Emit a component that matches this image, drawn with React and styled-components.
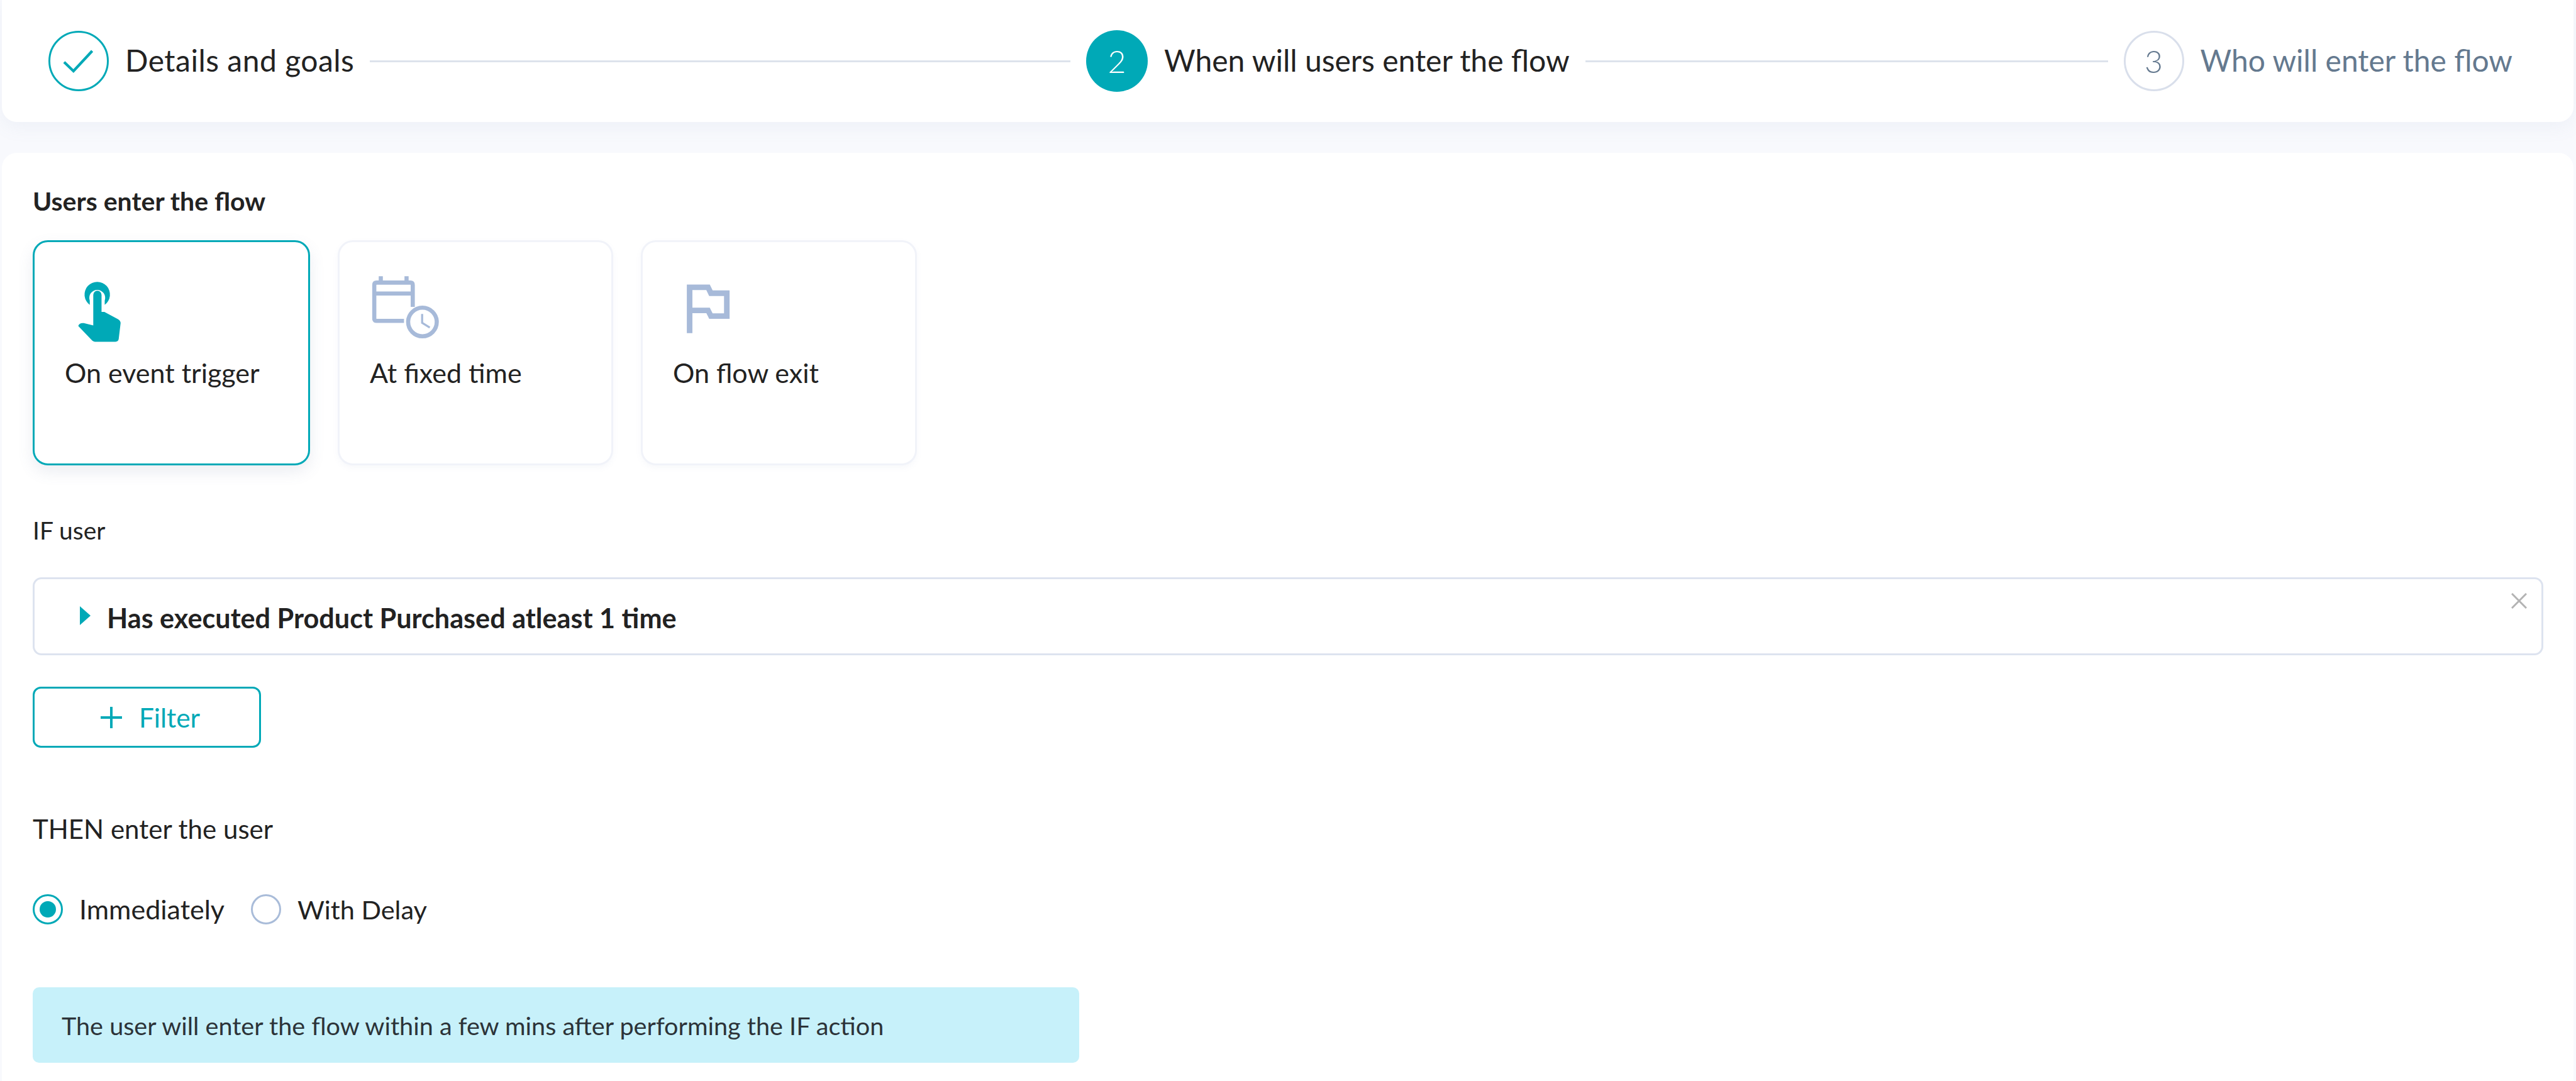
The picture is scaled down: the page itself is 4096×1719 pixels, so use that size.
import React from "react";
import styled, { createGlobalStyle } from "styled-components";

const Global = createGlobalStyle`
  html, body { margin: 0; padding: 0; background: #f8f9fd; }
  body { font-family: "Lato", "Open Sans", sans-serif; color: #222; }
  #root { width: 4096px; height: 1719px; overflow: hidden; }
`;

const Page = styled.div`
  width: 4096px;
  height: 1719px;
  padding: 0 4px 0 3px;
  box-sizing: border-box;
  display: flex;
  flex-direction: column;
  gap: 49px;
`;

const Stepper = styled.header`
  height: 194px;
  flex: none;
  background: #fff;
  border-radius: 0 0 24px 24px;
  box-shadow: 0 8px 30px rgba(120, 135, 180, 0.08);
  display: flex;
  align-items: center;
  padding: 0 97px 0 74px;
  box-sizing: border-box;
`;

const StepCircle = styled.div`
  width: ${(p) => (p.$state === "active" ? 98 : 96)}px;
  height: ${(p) => (p.$state === "active" ? 98 : 96)}px;
  flex: none;
  box-sizing: border-box;
  border-radius: 50%;
  display: flex;
  align-items: center;
  justify-content: center;
  font-size: 50px;
  font-weight: 300;
  background: ${(p) => (p.$state === "active" ? "#00a9b7" : "#fff")};
  color: ${(p) => (p.$state === "active" ? "#fff" : "#64798f")};
  border: ${(p) =>
    p.$state === "done"
      ? "3px solid #00a9b7"
      : p.$state === "todo"
      ? "3px solid #d9dfeb"
      : "none"};
`;

const StepLabel = styled.span`
  margin-left: 26px;
  margin-top: -2px;
  font-size: 48px;
  line-height: 60px;
  letter-spacing: ${(p) => p.$track || 0}px;
  white-space: nowrap;
  color: ${(p) => (p.$muted ? "#64798f" : "#222")};
`;

const StepLine = styled.div`
  flex: ${(p) => p.$grow} 1 0;
  height: 3px;
  margin: 0 25px;
  background: #dde2ec;
`;

const Panel = styled.main`
  flex: 1;
  background: #fff;
  border-radius: 24px 24px 0 0;
  padding: 0 0 0 49px;
  display: flex;
  flex-direction: column;
  align-items: flex-start;
`;

const Heading = styled.h2`
  margin: 52px 0 0;
  font-size: 41px;
  line-height: 50px;
  font-weight: 700;
  color: #222;
`;

const TriggerRow = styled.div`
  display: flex;
  gap: 44px;
  margin-top: 37px;
`;

const TriggerCard = styled.div`
  width: ${(p) => p.$w}px;
  height: 358px;
  box-sizing: border-box;
  background: #fff;
  border-radius: 24px;
  border: ${(p) => (p.$selected ? "3px solid #00a9b7" : "3px solid #f1f3f9")};
  box-shadow: ${(p) =>
    p.$selected
      ? "0 10px 24px rgba(90, 110, 150, 0.12)"
      : "0 4px 10px rgba(120, 135, 180, 0.06)"};
  padding: 25px 0 0 48px;
  display: flex;
  flex-direction: column;
  align-items: flex-start;
`;

const IconBox = styled.svg`
  display: block;
  width: 182px;
  height: 152px;
  margin-left: ${(p) => p.$x}px;
`;

const TriggerLabel = styled.div`
  margin-top: 6px;
  font-size: 43px;
  line-height: 50px;
  color: #222;
`;

const SectionLabel = styled.div`
  margin-top: ${(p) => p.$top}px;
  font-size: ${(p) => p.$size}px;
  line-height: 50px;
  color: #222;
`;

const RuleBox = styled.div`
  position: relative;
  margin-top: 50px;
  width: 3992px;
  height: 124px;
  box-sizing: border-box;
  border: 3px solid #dde3ef;
  border-radius: 14px;
  background: #fff;
  display: flex;
  align-items: center;
  padding-left: 72px;
`;

const Caret = styled.span`
  width: 0;
  height: 0;
  border-top: 15px solid transparent;
  border-bottom: 15px solid transparent;
  border-left: 17px solid #00a9b7;
  margin-right: 26px;
  margin-top: -2px;
`;

const RuleText = styled.span`
  font-size: 43.2px;
  font-weight: 700;
  line-height: 50px;
  margin-top: 4px;
  color: #222;
`;

const CloseIcon = styled.svg`
  position: absolute;
  top: 22px;
  right: 23px;
  width: 25px;
  height: 25px;
`;

const FilterButton = styled.button`
  margin-top: 50px;
  width: 363px;
  height: 97px;
  box-sizing: border-box;
  background: #fff;
  border: 3px solid #00a9b7;
  border-radius: 13px;
  color: #00a9b7;
  font-family: inherit;
  font-size: 42.5px;
  display: flex;
  align-items: center;
  justify-content: center;
  gap: 26px;
  padding: 0 0 0 10px;
`;

const RadioRow = styled.div`
  display: flex;
  align-items: center;
  margin-top: 79px;
  height: 48px;
`;

const Radio = styled.span`
  width: 48px;
  height: 48px;
  box-sizing: border-box;
  border-radius: 50%;
  border: 3px solid ${(p) => (p.$on ? "#00a9b7" : "#a9bcd9")};
  display: flex;
  align-items: center;
  justify-content: center;
  flex: none;
  &::after {
    content: "";
    display: ${(p) => (p.$on ? "block" : "none")};
    width: 26px;
    height: 26px;
    border-radius: 50%;
    background: #00a9b7;
  }
`;

const RadioLabel = styled.span`
  margin-left: 26px;
  margin-right: ${(p) => p.$gap}px;
  font-size: ${(p) => p.$size}px;
  line-height: 50px;
  color: #222;
`;

const Banner = styled.div`
  margin-top: 100px;
  width: 1664px;
  height: 120px;
  border-radius: 10px;
  background: #c7f1fa;
  display: flex;
  align-items: center;
  padding-left: 46px;
  box-sizing: border-box;
  font-size: 39.6px;
  color: #2c3338;
`;

const TEAL = "#00a9b7";
const SLATE = "#a7bad9";

const HandIcon = () => (
  <IconBox $x={-28} viewBox="0 0 720 600">
    <path
      fill={TEAL}
      d="M268 295 A80 80 0 1 1 362 295 L362 268 A50 50 0 1 0 268 268 Z"
    />
    <path
      fill={TEAL}
      d="M290 425 L290 232 A26 26 0 0 1 342 232 L342 340 L360 340 L445 385 Q462 395 462 410 L450 510 Q447 527 430 527 L300 527 Q290 527 283 520 L197 430 Q193 425 205 415 Q215 408 230 410 Z"
    />
  </IconBox>
);

const CalendarIcon = () => (
  <IconBox $x={-27} viewBox="0 0 720 600">
    <g fill="none" stroke={SLATE} strokeWidth="26">
      <path d="M322 396 L150 396 Q135 396 135 381 L135 170 Q135 155 150 155 L362 155 Q377 155 377 170 L377 308" />
      <path d="M135 224 L377 224" />
      <path d="M176 115 L176 155 M338 115 L338 155" />
      <circle cx="438" cy="403" r="90" />
    </g>
    <path d="M436 352 L436 408 L484 438" fill="none" stroke={SLATE} strokeWidth="13" />
  </IconBox>
);

const FlagIcon = () => (
  <IconBox $x={-22} viewBox="0 0 720 600">
    <path
      fill="none"
      stroke={SLATE}
      strokeWidth="35"
      d="M192 473 L192 185 L308 185 L326 222 L426 222 L426 366 L326 366 L308 330 L192 330"
    />
  </IconBox>
);

export default function App() {
  return (
    <Page>
      <Global />
      <Stepper>
        <StepCircle $state="done">
          <svg width="96" height="96" viewBox="0 0 127 127">
            <path d="M31 66 L52 86 L94 41" fill="none" stroke={TEAL} strokeWidth="6" />
          </svg>
        </StepCircle>
        <StepLabel $track={0.5}>Details and goals</StepLabel>
        <StepLine $grow={1115} />
        <StepCircle $state="active">2</StepCircle>
        <StepLabel>When will users enter the flow</StepLabel>
        <StepLine $grow={832} />
        <StepCircle $state="todo">3</StepCircle>
        <StepLabel $muted>Who will enter the flow</StepLabel>
      </Stepper>
      <Panel>
        <Heading>Users enter the flow</Heading>
        <TriggerRow>
          <TriggerCard $selected $w={441}>
            <HandIcon />
            <TriggerLabel>On event trigger</TriggerLabel>
          </TriggerCard>
          <TriggerCard $w={438}>
            <CalendarIcon />
            <TriggerLabel>At fixed time</TriggerLabel>
          </TriggerCard>
          <TriggerCard $w={439}>
            <FlagIcon />
            <TriggerLabel>On flow exit</TriggerLabel>
          </TriggerCard>
        </TriggerRow>
        <SectionLabel $top={78} $size={39}>IF user</SectionLabel>
        <RuleBox>
          <Caret />
          <RuleText>Has executed Product Purchased atleast 1 time</RuleText>
          <CloseIcon viewBox="0 0 25 25">
            <path d="M1 1 L24 24 M24 1 L1 24" stroke="#b3b3b3" strokeWidth="3" />
          </CloseIcon>
        </RuleBox>
        <FilterButton>
          <svg width="36" height="36" viewBox="0 0 36 36">
            <path d="M18 1 V35 M1 18 H35" stroke={TEAL} strokeWidth="4" />
          </svg>
          Filter
        </FilterButton>
        <SectionLabel $top={104} $size={42}>THEN enter the user</SectionLabel>
        <RadioRow>
          <Radio $on />
          <RadioLabel $gap={42} $size={43}>Immediately</RadioLabel>
          <Radio />
          <RadioLabel $gap={0} $size={41.5}>With Delay</RadioLabel>
        </RadioRow>
        <Banner>The user will enter the flow within a few mins after performing the IF action</Banner>
      </Panel>
    </Page>
  );
}
